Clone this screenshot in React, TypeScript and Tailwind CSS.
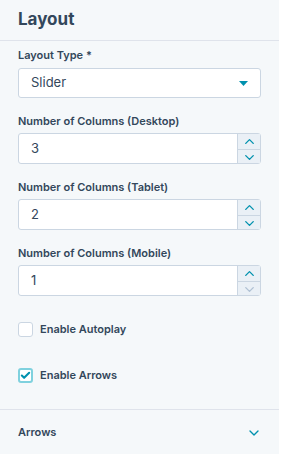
import { ChevronDown, ChevronUp, Check } from "lucide-react";

const FONT = { fontFamily: "Inter, 'Noto Sans', sans-serif" };

function NumberField({ label, value, downDisabled }: { label: string; value: string; downDisabled?: boolean }) {
  return (
    <div className="mt-[16px]">
      <p className="text-[11px] font-semibold leading-[14px] text-[#33475b]">{label}</p>
      <div className="mt-[5px] flex h-[31px] w-[243px] rounded-[3px] border border-[#cbd6e2] bg-white">
        <div className="flex flex-1 items-center pl-[12px] text-[13px] text-[#33475b]">{value}</div>
        <div className="flex w-[23px] flex-col border-l border-[#cbd6e2] bg-[#eaf0f6]">
          <div className="flex flex-1 items-center justify-center border-b border-[#cbd6e2]">
            <ChevronUp className="h-[15px] w-[15px] text-[#0091ae]" strokeWidth={2.2} />
          </div>
          <div className="flex flex-1 items-center justify-center">
            <ChevronDown
              className={`h-[15px] w-[15px] ${downDisabled ? "text-[#b0c1d4]" : "text-[#0091ae]"}`}
              strokeWidth={2.2}
            />
          </div>
        </div>
      </div>
    </div>
  );
}

export default function App() {
  return (
    <div className="flex h-[454px] w-[281px] overflow-hidden bg-white" style={FONT}>
      <div className="flex w-[279px] flex-col bg-[#f5f8fa]">
        <header className="flex h-[41px] shrink-0 items-center border-b border-[#dfe3eb] px-[18px]">
          <h1 className="text-[17px] font-bold text-[#33475b]">Layout</h1>
        </header>

        <div className="shrink-0 px-[18px] pt-[7px]">
          <p className="text-[11px] font-semibold leading-[14px] text-[#33475b]">Layout Type *</p>
          <div className="mt-[6px] flex h-[30px] w-[243px] items-center justify-between rounded-[3px] border border-[#cbd6e2] bg-white pl-[12px] pr-[12px]">
            <span className="text-[13px] text-[#33475b]">Slider</span>
            <svg width="9" height="5" viewBox="0 0 9 5">
              <path d="M0 0h9L4.5 5z" fill="#0091ae" />
            </svg>
          </div>

          <NumberField label="Number of Columns (Desktop)" value="3" />
          <NumberField label="Number of Columns (Tablet)" value="2" />
          <NumberField label="Number of Columns (Mobile)" value="1" downDisabled />

          <label className="mt-[26px] flex h-[15px] items-center gap-[7px]">
            <span className="h-[15px] w-[15px] rounded-[3px] border border-[#cbd6e2] bg-white" />
            <span className="text-[11px] font-semibold text-[#33475b]">Enable Autoplay</span>
          </label>

          <label className="mt-[31px] flex h-[15px] items-center gap-[7px]">
            <span className="flex h-[15px] w-[15px] items-center justify-center rounded-[3px] border-2 border-[#7fd1de] bg-white">
              <Check className="h-[11px] w-[11px] text-[#0091ae]" strokeWidth={4.5} />
            </span>
            <span className="text-[11px] font-semibold text-[#33475b]">Enable Arrows</span>
          </label>
        </div>

        <div className="mt-[26px] flex h-[46px] shrink-0 items-center justify-between border-t border-[#dfe3eb] pl-[18px] pr-[17px]">
          <span className="text-[11px] font-semibold text-[#33475b]">Arrows</span>
          <ChevronDown className="h-[16px] w-[16px] text-[#0091ae]" strokeWidth={2} />
        </div>
      </div>
    </div>
  );
}
